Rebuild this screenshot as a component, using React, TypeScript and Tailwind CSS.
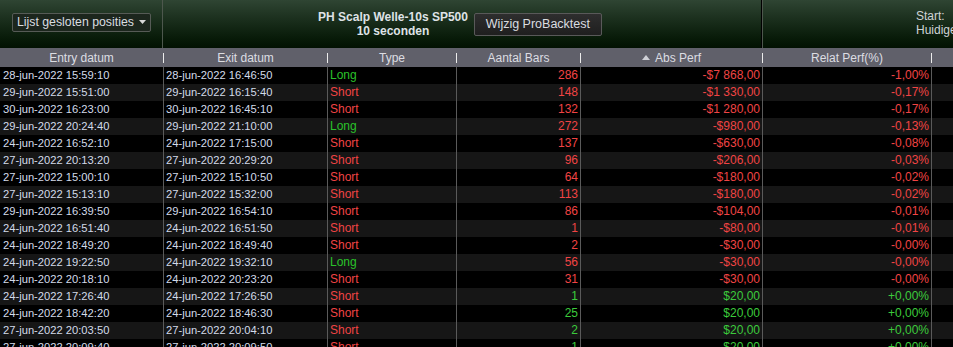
import React from "react";

// One closed position row
interface Trade {
  entry: string;
  exit: string;
  type: "Long" | "Short";
  bars: number;
  abs: string;
  rel: string;
}

const trades: Trade[] = [
  { entry: "28-jun-2022 15:59:10", exit: "28-jun-2022 16:46:50", type: "Long", bars: 286, abs: "-$7 868,00", rel: "-1,00%" },
  { entry: "29-jun-2022 15:51:00", exit: "29-jun-2022 16:15:40", type: "Short", bars: 148, abs: "-$1 330,00", rel: "-0,17%" },
  { entry: "30-jun-2022 16:23:00", exit: "30-jun-2022 16:45:10", type: "Short", bars: 132, abs: "-$1 280,00", rel: "-0,17%" },
  { entry: "29-jun-2022 20:24:40", exit: "29-jun-2022 21:10:00", type: "Long", bars: 272, abs: "-$980,00", rel: "-0,13%" },
  { entry: "24-jun-2022 16:52:10", exit: "24-jun-2022 17:15:00", type: "Short", bars: 137, abs: "-$630,00", rel: "-0,08%" },
  { entry: "27-jun-2022 20:13:20", exit: "27-jun-2022 20:29:20", type: "Short", bars: 96, abs: "-$206,00", rel: "-0,03%" },
  { entry: "27-jun-2022 15:00:10", exit: "27-jun-2022 15:10:50", type: "Short", bars: 64, abs: "-$180,00", rel: "-0,02%" },
  { entry: "27-jun-2022 15:13:10", exit: "27-jun-2022 15:32:00", type: "Short", bars: 113, abs: "-$180,00", rel: "-0,02%" },
  { entry: "29-jun-2022 16:39:50", exit: "29-jun-2022 16:54:10", type: "Short", bars: 86, abs: "-$104,00", rel: "-0,01%" },
  { entry: "24-jun-2022 16:51:40", exit: "24-jun-2022 16:51:50", type: "Short", bars: 1, abs: "-$80,00", rel: "-0,01%" },
  { entry: "24-jun-2022 18:49:20", exit: "24-jun-2022 18:49:40", type: "Short", bars: 2, abs: "-$30,00", rel: "-0,00%" },
  { entry: "24-jun-2022 19:22:50", exit: "24-jun-2022 19:32:10", type: "Long", bars: 56, abs: "-$30,00", rel: "-0,00%" },
  { entry: "24-jun-2022 20:18:10", exit: "24-jun-2022 20:23:20", type: "Short", bars: 31, abs: "-$30,00", rel: "-0,00%" },
  { entry: "24-jun-2022 17:26:40", exit: "24-jun-2022 17:26:50", type: "Short", bars: 1, abs: "$20,00", rel: "+0,00%" },
  { entry: "24-jun-2022 18:42:20", exit: "24-jun-2022 18:46:30", type: "Short", bars: 25, abs: "$20,00", rel: "+0,00%" },
  { entry: "27-jun-2022 20:03:50", exit: "27-jun-2022 20:04:10", type: "Short", bars: 2, abs: "$20,00", rel: "+0,00%" },
  { entry: "27-jun-2022 20:09:40", exit: "27-jun-2022 20:09:50", type: "Short", bars: 1, abs: "$20,00", rel: "+0,00%" },
];

const cols = "grid grid-cols-[164px_164px_129px_124px_182px_169px_1fr]";

const HeaderCell: React.FC<{ label: React.ReactNode; sep?: boolean }> = ({ label, sep = true }) => (
  <div className="flex items-center">
    <div className="flex-1 flex items-center justify-center gap-[5px]">{label}</div>
    {sep && <div className="w-px h-[10px] bg-[#ececec]" />}
  </div>
);

const App: React.FC = () => {
  return (
    <div className="w-[953px] h-[347px] overflow-hidden bg-black font-['Liberation_Sans',Arial,sans-serif]">
      {/* Toolbar */}
      <div className="flex h-[48px] bg-gradient-to-b from-[#2f4533] to-[#021102]">
        <div className="w-[163px] flex items-center pl-[12px] pb-[4px] border-r border-[#4d574d]">
          <button className="flex items-center gap-[5px] h-[19px] pl-[4px] pr-[4px] rounded-[2px] border border-[#565b56] bg-[#1c261d] text-[12.3px] text-[#dadde0] leading-none">
            Lijst gesloten posities
            <svg width="7" height="4" viewBox="0 0 7 4">
              <path d="M0 0 H7 L3.5 4 Z" fill="#d8d8d8" />
            </svg>
          </button>
        </div>
        <div className="w-[599px] flex items-center justify-center gap-[6px] pr-[4px] border-r border-black">
          <div className="text-center font-bold text-[12px] leading-[14px] text-[#dfe2e6]">
            <div>PH Scalp Welle-10s SP500</div>
            <div>10 seconden</div>
          </div>
          <button className="h-[23px] w-[128px] rounded-[2px] border border-[#595959] bg-gradient-to-b from-[#2e2e2e] to-[#1f1f1f] text-[12.5px] text-[#dadde0] leading-none">
            Wijzig ProBacktest
          </button>
        </div>
        <div className="flex-1 border-l border-[#4d574d] pl-[153px] pt-[9px] text-[12px] leading-[14px] text-[#cfd3d6] whitespace-nowrap overflow-hidden">
          <div>Start:</div>
          <div>Huidige periode</div>
        </div>
      </div>

      {/* Column headers */}
      <div className={`${cols} h-[19px] bg-[#60606a] text-[12px] text-[#dcdde2]`}>
        <HeaderCell label="Entry datum" />
        <HeaderCell label="Exit datum" />
        <HeaderCell label="Type" />
        <HeaderCell label="Aantal Bars" />
        <HeaderCell
          label={
            <>
              <svg width="8" height="5" viewBox="0 0 8 5">
                <path d="M4 0 L8 5 H0 Z" fill="#cfd0d6" />
              </svg>
              <span>Abs Perf</span>
            </>
          }
        />
        <HeaderCell label="Relat Perf(%)" />
        <HeaderCell label="" sep={false} />
      </div>

      {/* Rows */}
      <div>
        {trades.map((t, i) => {
          const win = t.abs.startsWith("$");
          const valColor = win ? "text-[#3ccb3c]" : "text-[#f04444]";
          return (
            <div
              key={i}
              className={`${cols} h-[17px] text-[11.2px] leading-[17px] whitespace-nowrap ${i % 2 === 0 ? "bg-black" : "bg-[#161616]"}`}
            >
              <div className="pl-[3px] border-r border-[#5a5a5a] text-[#d3dbe9]">{t.entry}</div>
              <div className="pl-[2px] border-r border-[#5a5a5a] text-[#d3dbe9]">{t.exit}</div>
              <div className={`pl-[2px] border-r border-[#5a5a5a] text-[12px] ${t.type === "Long" ? "text-[#2ac22a]" : "text-[#f04444]"}`}>
                {t.type}
              </div>
              <div className={`pr-[2px] text-right border-r border-[#5a5a5a] text-[12px] ${valColor}`}>{t.bars}</div>
              <div className={`pr-[2px] text-right border-r border-[#5a5a5a] text-[12px] ${valColor}`}>{t.abs}</div>
              <div className={`pr-[2px] text-right border-r border-[#5a5a5a] text-[12px] ${valColor}`}>{t.rel}</div>
              <div />
            </div>
          );
        })}
      </div>
    </div>
  );
};

export default App;
